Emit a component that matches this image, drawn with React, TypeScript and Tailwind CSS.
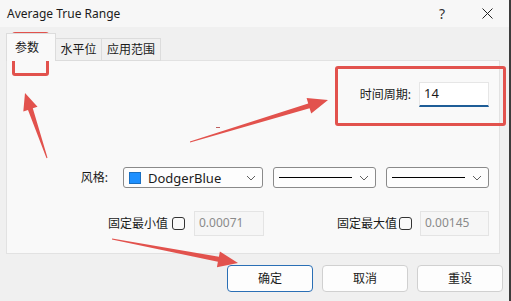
import { ReactNode } from "react";

const font = { fontFamily: '"Noto Sans", "Noto Sans CJK SC", sans-serif' };

function Chevron() {
  return (
    <svg width="10" height="6" viewBox="0 0 10 6" className="shrink-0">
      <polyline points="1,1 5,5 9,1" fill="none" stroke="#606060" strokeWidth="1" />
    </svg>
  );
}

function Select({ width, children }: { width: string; children: ReactNode }) {
  return (
    <div className={`${width} h-[21px] flex items-center pl-[5px] pr-[6px] gap-[6px] bg-[#fdfdfd] border border-[#8a8a8a] rounded-[3px]`}>
      <div className="flex-1 flex items-center gap-[7px]">{children}</div>
      <Chevron />
    </div>
  );
}

function CheckBox() {
  return <div className="w-[13px] h-[13px] border border-[#333] rounded-[3px] bg-[#fafafa]" />;
}

function Button({ label, primary }: { label: string; primary?: boolean }) {
  return (
    <button
      className={`w-[86px] h-[27px] rounded-[4px] bg-[#fdfdfd] text-[12px] text-[#1a1a1a] border ${
        primary ? "border-[#2a6fb5]" : "border-[#d0d0d0]"
      }`}
    >
      {label}
    </button>
  );
}

export default function App() {
  return (
    <div className="relative w-[511px] h-[301px] bg-[#f0f0f0] overflow-hidden border-r-2 border-[#3c3c3c] text-[#1a1a1a]" style={font}>
      {/* title bar */}
      <div className="h-[27px] flex items-center bg-[#f7f7f7] pl-[7px]">
        <span className="text-[12px] text-[#1b1b1b] flex-1">Average True Range</span>
        <span className="text-[14px] text-[#333] mr-[37px]">?</span>
        <svg width="11" height="11" viewBox="0 0 11 11" className="mr-[16px]">
          <path d="M0.5 0.5 L10.5 10.5 M10.5 0.5 L0.5 10.5" stroke="#222" strokeWidth="1" />
        </svg>
      </div>

      {/* tabs */}
      <div className="flex items-end pl-[6px] mt-[6px] h-[28px]">
        <div className="w-[50px] h-[28px] bg-[#f9f9f9] border border-b-0 border-[#dcdcdc] text-[12px] pl-[8px] pt-[5px] relative z-10">
          参数
        </div>
        <div className="w-[46px] h-[23px] bg-[#f0f0f0] border border-l-0 border-[#dcdcdc] text-[12px] flex items-center justify-center">
          水平位
        </div>
        <div className="w-[59px] h-[23px] bg-[#f0f0f0] border border-l-0 border-[#dcdcdc] text-[12px] flex items-center justify-center">
          应用范围
        </div>
      </div>

      {/* panel */}
      <div className="mx-[6px] w-[494px] h-[194px] -mt-px bg-[#f9f9f9] border border-[#e2e2e2] pr-[10px] flex flex-col">
        <div className="flex items-center justify-end mt-[21px] h-[25px]">
          <span className="text-[12px] mr-[8px]">时间周期:</span>
          <div className="w-[70px] h-[25px] bg-white border border-[#e6e6e6] border-b-2 border-b-[#1e5d97] pl-[4px] flex items-center text-[13px]">
            14
          </div>
        </div>

        <div className="flex items-center justify-end mt-[60px] gap-[10px]">
          <span className="text-[12px] mr-[5px]">风格:</span>
          <Select width="w-[140px]">
            <div className="w-[12px] h-[12px] bg-[#1e90ff] border border-[#1a6fc0] shrink-0" />
            <span className="text-[13px] text-[#1b1b1b] leading-[18px]">DodgerBlue</span>
          </Select>
          <Select width="w-[103px]">
            <div className="w-[73px] h-px bg-black" />
          </Select>
          <Select width="w-[103px]">
            <div className="w-[73px] h-px bg-black" />
          </Select>
        </div>

        <div className="flex items-center justify-end mt-[23px]">
          <span className="text-[12px]">固定最小值</span>
          <div className="ml-[4px] mr-[9px]"><CheckBox /></div>
          <div className="w-[70px] h-[25px] bg-[#f6f6f6] border border-[#e4e4e4] pl-[4px] pt-[2px] text-[12px] text-[#8a8a8a]">0.00071</div>
          <span className="text-[12px] ml-[73px]">固定最大值</span>
          <div className="ml-[2px] mr-[8px]"><CheckBox /></div>
          <div className="w-[69px] h-[25px] bg-[#f6f6f6] border border-[#e4e4e4] pl-[4px] pt-[2px] text-[12px] text-[#8a8a8a]">0.00145</div>
        </div>
      </div>

      {/* buttons */}
      <div className="flex justify-end gap-[9px] mt-[11px] pr-[6px]">
        <Button label="确定" primary />
        <Button label="取消" />
        <Button label="重设" />
      </div>

      {/* annotations */}
      <div className="absolute left-[12px] top-[32px] w-[37px] h-[44px] border-[3px] border-[#e2524d] rounded-[3px]" />
      <div className="absolute left-[335px] top-[66px] w-[171px] h-[60px] border-[3px] border-[#e2524d] rounded-[3px]" />
      <svg className="absolute left-0 top-0 pointer-events-none" width="511" height="301" viewBox="0 0 511 301">
        <polygon
          fill="#e2524d"
          points="47.5,157.8 32.8,108.3 37.5,106.7 25,93 23.3,111.5 28,109.9 46.5,158.2"
        />
        <polygon
          fill="#e2524d"
          points="190.1,142.6 309.6,108.2 311.2,113.5 328,100 306.6,98.1 308.2,103.4 189.9,141.4"
        />
        <polygon
          fill="#e2524d"
          points="111.9,239.6 217.9,261.8 216.9,267.2 238,263 219.9,251.4 218.9,256.8 112.1,238.4"
        />
        <line x1="216" y1="127.5" x2="220" y2="127.5" stroke="#c06060" strokeWidth="1" />
      </svg>
    </div>
  );
}
